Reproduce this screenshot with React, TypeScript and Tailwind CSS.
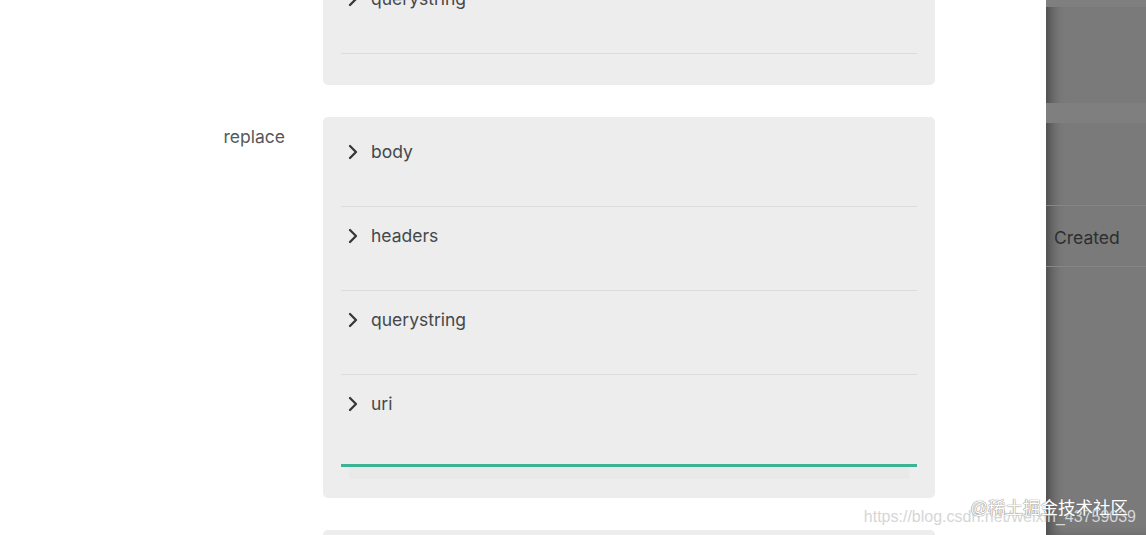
import { ChevronRight } from "lucide-react";

type Field = { name: string; active?: boolean };

const prevFields: Field[] = [{ name: "querystring" }];
const replaceFields: Field[] = [
  { name: "body" },
  { name: "headers" },
  { name: "querystring" },
  { name: "uri", active: true },
];

function FieldRow({ field }: { field: Field }) {
  return (
    <div
      className={
        field.active
          ? "border-b-[3px] border-[#3db394] pt-[17px] pb-[48px]"
          : "border-b border-[#dcdcdc] pt-[17px] pb-[42px]"
      }
    >
      <button className="flex items-center text-[17.5px] leading-6 text-[#44484c]">
        <ChevronRight size={24} strokeWidth={2.3} className="text-[#34383b]" />
        <span className="ml-[6px]">{field.name}</span>
      </button>
    </div>
  );
}

function FieldCard({ fields }: { fields: Field[] }) {
  const hasActive = fields.some((f) => f.active);
  return (
    <div
      className={
        hasActive
          ? "w-[612px] rounded-[5px] bg-[#ededed] px-[18px] pt-[6px] pb-[19px]"
          : "w-[612px] rounded-[5px] bg-[#ededed] px-[18px] pt-[6px] pb-[31px]"
      }
    >
      {fields.map((f) => (
        <FieldRow key={f.name} field={f} />
      ))}
      {hasActive && <div className="mx-[8px] h-[12px] bg-[#e9e9e9]" />}
    </div>
  );
}

export default function App() {
  return (
    <div
      className="relative flex h-[535px] w-[1146px] overflow-hidden bg-white"
      style={{ fontFamily: "Inter, 'Noto Sans', sans-serif" }}
    >
      <main className="w-[1046px] shrink-0">
        <div className="-mt-[36px] flex flex-col gap-[32px]">
          <div className="flex gap-[38px]">
            <div className="w-[285px]" />
            <FieldCard fields={prevFields} />
          </div>
          <div className="flex gap-[38px]">
            <div className="w-[285px] pt-[8px] text-right text-[17.5px] leading-6 text-[#54585c]">
              replace
            </div>
            <FieldCard fields={replaceFields} />
          </div>
          <div className="flex gap-[38px]">
            <div className="w-[285px]" />
            <div className="h-[80px] w-[612px] rounded-[5px] bg-[#ededed]" />
          </div>
        </div>
      </main>

      <aside className="flex w-[100px] shrink-0 flex-col bg-[#7a7a7a] shadow-[inset_10px_0_14px_-6px_rgba(0,0,0,0.45)]">
        <div className="h-[7px] bg-[#7f7f7f]" />
        <div className="h-[96px]" />
        <div className="h-[20px] bg-[#7f7f7f]" />
        <div className="h-[83px] border-b border-[#868686]" />
        <div className="flex h-[61px] items-center border-b border-[#868686] pt-[4px] pl-[8px] text-[17.5px] text-[#2c2e30]">
          Created
        </div>
      </aside>

      <div className="pointer-events-none absolute right-[10px] bottom-[10px] text-[16px] leading-none text-[#d6d6d6] [font-family:'Liberation_Sans',sans-serif]">
        https://blog.csdn.net/weixin_43759039
      </div>
      <div className="pointer-events-none absolute right-[18px] bottom-[18px] text-[17.5px] leading-none text-white [text-shadow:0_0_1px_#777,0_0_1px_#777] [font-family:'Liberation_Sans','Noto_Sans_CJK_SC',sans-serif]">
        @稀土掘金技术社区
      </div>
    </div>
  );
}
